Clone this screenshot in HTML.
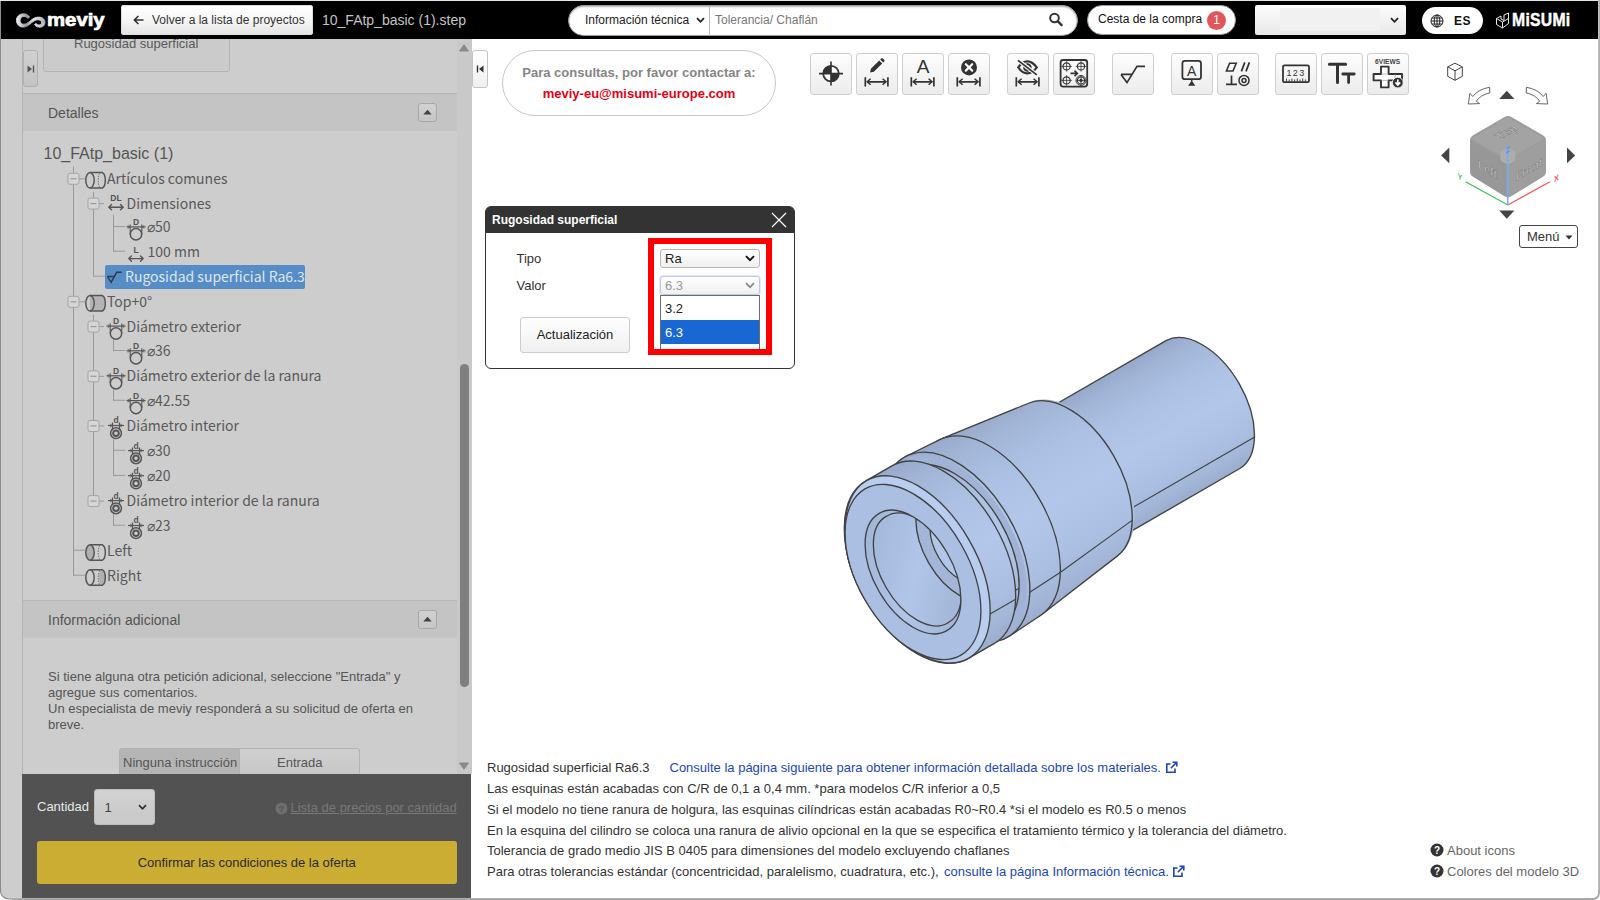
<!DOCTYPE html>
<html lang="es">
<head>
<meta charset="utf-8">
<title>meviy</title>
<style>
*{box-sizing:border-box;margin:0;padding:0}
html,body{width:1600px;height:900px;overflow:hidden;background:#fff}
body{position:relative;font-family:"Liberation Sans",Arial,sans-serif;font-size:12px;color:#333}
.abs{position:absolute}
#frame{position:absolute;left:0;top:0;width:1600px;height:900px;overflow:hidden}
#hdr{position:absolute;left:1px;top:1px;width:1597px;height:38px;background:#000}
#gutter{position:absolute;left:1px;top:39px;width:22px;height:859px;background:#cdcdcd}
#left{position:absolute;left:0;top:39px;width:472px;height:735px;overflow:hidden}
.tr{font-family:'Noto Sans CJK JP','Liberation Sans',sans-serif;font-size:14px;line-height:24px;height:24px}
#main{position:absolute;left:471px;top:39px;width:1127px;height:859px;background:#fff}
#buy{position:absolute;left:22px;top:774px;width:449px;height:124px;background:#525252}
.t{position:absolute;white-space:nowrap;line-height:1}
#backbtn{left:120px;top:4px;width:192px;height:30px;border-radius:2px;background:linear-gradient(#fff,#f6f6f6 50%,#e4e4e4);border:1px solid #ddd}
#search{left:567px;top:4px;width:510px;height:31px;border-radius:16px;background:#fff;border:1px solid #999;box-shadow:inset 0 1px 2px rgba(0,0,0,.3)}
#cart{left:1086px;top:4px;width:149px;height:30px;border-radius:15px;background:#fff;border:1px solid #999}
#usersel{left:1254px;top:4px;width:151px;height:30px;border-radius:2px;background:linear-gradient(#fdfdfd,#e8e8e8)}
#lang{left:1421px;top:6px;width:60.500px;height:27px;border-radius:13.500px;background:#fff}
.tb{position:absolute;top:53px;width:42px;height:42px;border:1px solid #cfcfcf;border-radius:3px;background:linear-gradient(#fdfdfd,#ececec)}
#dlg{left:485px;top:206px;width:310px;height:163px;border:1px solid #333;border-radius:6px;background:#fff}
.sel{width:100px;height:19px;border:1px solid #b8b8b8;border-radius:3px;background:linear-gradient(#fff,#f0f0f0)}
.nt{left:487px;font-size:13px;color:#333}
/*SECTION-CSS*/
</style>
</head>
<body>
<div id="frame">
<div id="main"></div>
<div id="gutter"></div>
<div id="left">
<!--LEFT-START-->
<div class="abs" style="left:23px;top:0px;width:449px;height:735px;background:#cdcdcd"></div>
<div class="abs" style="left:22px;top:0px;width:1px;height:735px;background:#b4b4b4"></div>
<div class="abs" style="left:43px;top:-10px;width:187px;height:43px;border:1px solid #b4b4b4;border-radius:3px;background:#cbcbcb"></div>
<div class="t" style="left:74px;top:-2px;font-size:13px;color:#5a5a5a">Rugosidad superficial</div>
<div class="abs" style="left:23px;top:11px;width:15px;height:37px;border:1px solid #b0b0b0;border-radius:3px;background:linear-gradient(#d0d0d0,#c4c4c4)"><svg width="8" height="8" viewBox="0 0 8 8" style="position:absolute;left:3px;top:14px"><path d="M0.500 0.500L5 4 0.500 7.500z" fill="#555"/><rect x="5.800" y="0.500" width="1.400" height="7" fill="#555"/></svg></div>
<div class="abs" style="left:23px;top:54px;width:434px;height:1px;background:#b6b6b6"></div>
<div class="abs" style="left:23px;top:55px;width:434px;height:37px;background:#c4c4c4"></div>
<div class="t" style="left:48px;top:67px;font-size:14px;color:#555">Detalles</div>
<div class="abs" style="left:418px;top:64px;width:19px;height:19px;border:1px solid #a8a8a8;border-radius:3px;background:linear-gradient(#d2d2d2,#c6c6c6)"><svg width="9" height="6" viewBox="0 0 9 6" style="position:absolute;left:4px;top:5px"><path d="M0.300 5.500L4.500 0.800 8.700 5.500z" fill="#444"/></svg></div>
<div class="abs" style="left:23px;top:561px;width:434px;height:1px;background:#b6b6b6"></div>
<div class="abs" style="left:23px;top:562px;width:434px;height:37px;background:#c4c4c4"></div>
<div class="t" style="left:48px;top:574px;font-size:14px;color:#555">Información adicional</div>
<div class="abs" style="left:418px;top:571px;width:19px;height:19px;border:1px solid #a8a8a8;border-radius:3px;background:linear-gradient(#d2d2d2,#c6c6c6)"><svg width="9" height="6" viewBox="0 0 9 6" style="position:absolute;left:4px;top:5px"><path d="M0.300 5.500L4.500 0.800 8.700 5.500z" fill="#444"/></svg></div>
<div class="t" style="left:44px;top:107px;left:43.500px;font-size:16px;color:#555">10_FAtp_basic (1)</div>
<div class="abs" style="left:105px;top:226px;width:200px;height:24px;background:#568dc6;border-radius:2px"></div>
<div class="t tr" style="left:107px;top:131.8px;color:#595959">Artículos comunes</div>
<div class="t tr" style="left:126.5px;top:156.6px;color:#595959">Dimensiones</div>
<div class="t tr" style="left:147px;top:180.4px;color:#595959">⌀50</div>
<div class="t tr" style="left:147.5px;top:205.0px;color:#595959">100 mm</div>
<div class="t tr" style="left:125px;top:230.0px;color:#dfe6ee">Rugosidad superficial Ra6.3</div>
<div class="t tr" style="left:107px;top:254.8px;color:#595959">Top+0°</div>
<div class="t tr" style="left:126.5px;top:279.6px;color:#595959">Diámetro exterior</div>
<div class="t tr" style="left:147px;top:304.3px;color:#595959">⌀36</div>
<div class="t tr" style="left:126.5px;top:329.3px;color:#595959">Diámetro exterior de la ranura</div>
<div class="t tr" style="left:147px;top:354.1px;color:#595959">⌀42.55</div>
<div class="t tr" style="left:126.5px;top:379.0px;color:#595959">Diámetro interior</div>
<div class="t tr" style="left:147px;top:404.1px;color:#595959">⌀30</div>
<div class="t tr" style="left:147px;top:429.2px;color:#595959">⌀20</div>
<div class="t tr" style="left:126.5px;top:454.1px;color:#595959">Diámetro interior de la ranura</div>
<div class="t tr" style="left:147px;top:479.0px;color:#595959">⌀23</div>
<div class="t tr" style="left:107px;top:504.0px;color:#595959">Left</div>
<div class="t tr" style="left:107px;top:529.0px;color:#595959">Right</div>
<svg class="abs" style="left:0;top:0" width="472" height="735" viewBox="0 0 472 735"><path d="M73.5 127.5V537.0" stroke="#9a9a9a" stroke-width="1" fill="none"/><path d="M93.5 152.8V238.0" stroke="#9a9a9a" stroke-width="1" fill="none"/><path d="M113.5 175.6V213.0" stroke="#9a9a9a" stroke-width="1" fill="none"/><path d="M93.5 275.8V462.1" stroke="#9a9a9a" stroke-width="1" fill="none"/><path d="M113.5 300.6V312.3" stroke="#9a9a9a" stroke-width="1" fill="none"/><path d="M113.5 350.3V362.1" stroke="#9a9a9a" stroke-width="1" fill="none"/><path d="M113.5 400.0V437.2" stroke="#9a9a9a" stroke-width="1" fill="none"/><path d="M113.5 475.1V487.0" stroke="#9a9a9a" stroke-width="1" fill="none"/><path d="M73.5 139.8H85.0" stroke="#9a9a9a" stroke-width="1" fill="none"/><rect x="68.0" y="134.3" width="11" height="11" rx="2" fill="#d6d6d6" stroke="#a4a4a4"/><path d="M70.5 139.8h6" stroke="#999" stroke-width="1.2"/><g transform="translate(85,132.8)" fill="none" stroke="#555" stroke-width="1.500"><path d="M5 0.800H17.500Q20.300 2.500 20.300 8.500T17.500 16.200H5"/><ellipse cx="5" cy="8.500" rx="4.200" ry="7.700" fill="none"/><path d="M14.500 1.500Q12 8.500 14.500 15.500" stroke-width="1" stroke-dasharray="1.200 1.400"/></g><path d="M93.5 164.6H104.0" stroke="#9a9a9a" stroke-width="1" fill="none"/><rect x="88.0" y="159.1" width="11" height="11" rx="2" fill="#d6d6d6" stroke="#a4a4a4"/><path d="M90.5 164.6h6" stroke="#999" stroke-width="1.2"/><text x="116" y="161.6" font-size="8.500" font-weight="bold" text-anchor="middle" fill="#555" font-family="Liberation Sans,sans-serif">DL</text><path d="M109 168.2H123M111.5 165.6L108.8 168.2l2.700 2.600M120.5 165.6L123.2 168.2l-2.700 2.600" stroke="#555" stroke-width="1.4" fill="none" stroke-linejoin="round" stroke-linecap="round"/><path d="M113.5 187.6H125.0" stroke="#9a9a9a" stroke-width="1" fill="none"/><g transform="translate(126.5,188.4)" fill="none" stroke="#555"><path d="M0 -0.500H19" stroke-width="1.200"/><path d="M3.700 -3V6.500M15.300 -3V6.500" stroke-width="1.100"/><path d="M1.200 -2l2.400 1.500-2.400 1.500M17.800 -2l-2.400 1.500 2.400 1.500" stroke-width=".8"/><circle cx="9.500" cy="6.900" r="5.700" stroke-width="1.500"/><text x="9.500" y="-2.600" font-size="8.500" font-weight="bold" text-anchor="middle" fill="#555" stroke="none" font-family="Liberation Sans,sans-serif">D</text></g><path d="M113.5 212.2H125.0" stroke="#9a9a9a" stroke-width="1" fill="none"/><text x="136" y="213.5" font-size="8.500" font-weight="bold" text-anchor="middle" fill="#555" font-family="Liberation Sans,sans-serif">L</text><path d="M129 219.6H143M131.5 217.0L128.8 219.6l2.700 2.600M140.5 217.0L143.2 219.6l-2.700 2.600" stroke="#555" stroke-width="1.4" fill="none" stroke-linejoin="round" stroke-linecap="round"/><path d="M93.5 237.2H105.0" stroke="#9a9a9a" stroke-width="1" fill="none"/><path d="M107.500 237.5h7.200M107.500 237.5l3.600 5.800 5.600-10h5" stroke="#2e3a46" stroke-width="1.400" fill="none" stroke-linejoin="miter"/><path d="M73.5 262.8H85.0" stroke="#9a9a9a" stroke-width="1" fill="none"/><rect x="68.0" y="257.3" width="11" height="11" rx="2" fill="#d6d6d6" stroke="#a4a4a4"/><path d="M70.5 262.8h6" stroke="#999" stroke-width="1.2"/><g transform="translate(85,255.8)" fill="none" stroke="#555" stroke-width="1.500"><path d="M5 0.800H17.500Q20.300 2.500 20.300 8.500T17.500 16.200H5z" fill="#b4b4b4" stroke="none"/><path d="M5 0.800H17.500Q20.300 2.500 20.300 8.500T17.500 16.200H5"/><ellipse cx="5" cy="8.500" rx="4.200" ry="7.700" fill="none"/></g><path d="M93.5 287.6H104.0" stroke="#9a9a9a" stroke-width="1" fill="none"/><rect x="88.0" y="282.1" width="11" height="11" rx="2" fill="#d6d6d6" stroke="#a4a4a4"/><path d="M90.5 287.6h6" stroke="#999" stroke-width="1.2"/><g transform="translate(106.5,287.6)" fill="none" stroke="#555"><path d="M0 -0.500H19" stroke-width="1.200"/><path d="M3.700 -3V6.500M15.300 -3V6.500" stroke-width="1.100"/><path d="M1.200 -2l2.400 1.500-2.400 1.500M17.800 -2l-2.400 1.500 2.400 1.500" stroke-width=".8"/><circle cx="9.500" cy="6.900" r="5.700" stroke-width="1.500"/><text x="9.500" y="-2.600" font-size="8.500" font-weight="bold" text-anchor="middle" fill="#555" stroke="none" font-family="Liberation Sans,sans-serif">D</text></g><path d="M113.5 311.5H125.0" stroke="#9a9a9a" stroke-width="1" fill="none"/><g transform="translate(126.5,312.3)" fill="none" stroke="#555"><path d="M0 -0.500H19" stroke-width="1.200"/><path d="M3.700 -3V6.500M15.300 -3V6.500" stroke-width="1.100"/><path d="M1.200 -2l2.400 1.500-2.400 1.500M17.800 -2l-2.400 1.500 2.400 1.500" stroke-width=".8"/><circle cx="9.500" cy="6.900" r="5.700" stroke-width="1.500"/><text x="9.500" y="-2.600" font-size="8.500" font-weight="bold" text-anchor="middle" fill="#555" stroke="none" font-family="Liberation Sans,sans-serif">D</text></g><path d="M93.5 337.3H104.0" stroke="#9a9a9a" stroke-width="1" fill="none"/><rect x="88.0" y="331.8" width="11" height="11" rx="2" fill="#d6d6d6" stroke="#a4a4a4"/><path d="M90.5 337.3h6" stroke="#999" stroke-width="1.2"/><g transform="translate(106.5,337.3)" fill="none" stroke="#555"><path d="M0 -0.500H19" stroke-width="1.200"/><path d="M3.700 -3V6.500M15.300 -3V6.500" stroke-width="1.100"/><path d="M1.200 -2l2.400 1.500-2.400 1.500M17.800 -2l-2.400 1.500 2.400 1.500" stroke-width=".8"/><circle cx="9.500" cy="6.900" r="5.700" stroke-width="1.500"/><text x="9.500" y="-2.600" font-size="8.500" font-weight="bold" text-anchor="middle" fill="#555" stroke="none" font-family="Liberation Sans,sans-serif">D</text></g><path d="M113.5 361.3H125.0" stroke="#9a9a9a" stroke-width="1" fill="none"/><g transform="translate(126.5,362.1)" fill="none" stroke="#555"><path d="M0 -0.500H19" stroke-width="1.200"/><path d="M3.700 -3V6.500M15.300 -3V6.500" stroke-width="1.100"/><path d="M1.200 -2l2.400 1.500-2.400 1.500M17.800 -2l-2.400 1.500 2.400 1.500" stroke-width=".8"/><circle cx="9.500" cy="6.900" r="5.700" stroke-width="1.500"/><text x="9.500" y="-2.600" font-size="8.500" font-weight="bold" text-anchor="middle" fill="#555" stroke="none" font-family="Liberation Sans,sans-serif">D</text></g><path d="M93.5 387.0H104.0" stroke="#9a9a9a" stroke-width="1" fill="none"/><rect x="88.0" y="381.5" width="11" height="11" rx="2" fill="#d6d6d6" stroke="#a4a4a4"/><path d="M90.5 387.0h6" stroke="#999" stroke-width="1.2"/><g transform="translate(106.5,387.0)" fill="none" stroke="#555"><path d="M1.500 -0.500H17.500" stroke-width="1.200"/><path d="M6 -3.500V4M13 -3.500V4" stroke-width="1.200"/><path d="M3.600 -2l2.200 1.500-2.200 1.500M15.400 -2l-2.200 1.500 2.200 1.500" stroke-width=".8"/><circle cx="9.500" cy="7.200" r="5.400" stroke-width="1.500"/><circle cx="9.500" cy="7.200" r="2.800" stroke-width="2"/><text x="9.500" y="-2.600" font-size="8.500" font-weight="bold" text-anchor="middle" fill="#555" stroke="none" font-family="Liberation Sans,sans-serif">d</text></g><path d="M113.5 411.3H125.0" stroke="#9a9a9a" stroke-width="1" fill="none"/><g transform="translate(126.5,412.1)" fill="none" stroke="#555"><path d="M1.500 -0.500H17.500" stroke-width="1.200"/><path d="M6 -3.500V4M13 -3.500V4" stroke-width="1.200"/><path d="M3.600 -2l2.200 1.500-2.200 1.500M15.400 -2l-2.200 1.500 2.200 1.500" stroke-width=".8"/><circle cx="9.500" cy="7.200" r="5.400" stroke-width="1.500"/><circle cx="9.500" cy="7.200" r="2.800" stroke-width="2"/><text x="9.500" y="-2.600" font-size="8.500" font-weight="bold" text-anchor="middle" fill="#555" stroke="none" font-family="Liberation Sans,sans-serif">d</text></g><path d="M113.5 436.4H125.0" stroke="#9a9a9a" stroke-width="1" fill="none"/><g transform="translate(126.5,437.2)" fill="none" stroke="#555"><path d="M1.500 -0.500H17.500" stroke-width="1.200"/><path d="M6 -3.500V4M13 -3.500V4" stroke-width="1.200"/><path d="M3.600 -2l2.200 1.500-2.200 1.500M15.400 -2l-2.200 1.500 2.200 1.500" stroke-width=".8"/><circle cx="9.500" cy="7.200" r="5.400" stroke-width="1.500"/><circle cx="9.500" cy="7.200" r="2.800" stroke-width="2"/><text x="9.500" y="-2.600" font-size="8.500" font-weight="bold" text-anchor="middle" fill="#555" stroke="none" font-family="Liberation Sans,sans-serif">d</text></g><path d="M93.5 462.1H104.0" stroke="#9a9a9a" stroke-width="1" fill="none"/><rect x="88.0" y="456.6" width="11" height="11" rx="2" fill="#d6d6d6" stroke="#a4a4a4"/><path d="M90.5 462.1h6" stroke="#999" stroke-width="1.2"/><g transform="translate(106.5,462.1)" fill="none" stroke="#555"><path d="M1.500 -0.500H17.500" stroke-width="1.200"/><path d="M6 -3.500V4M13 -3.500V4" stroke-width="1.200"/><path d="M3.600 -2l2.200 1.500-2.200 1.500M15.400 -2l-2.200 1.500 2.200 1.500" stroke-width=".8"/><circle cx="9.500" cy="7.200" r="5.400" stroke-width="1.500"/><circle cx="9.500" cy="7.200" r="2.800" stroke-width="2"/><text x="9.500" y="-2.600" font-size="8.500" font-weight="bold" text-anchor="middle" fill="#555" stroke="none" font-family="Liberation Sans,sans-serif">d</text></g><path d="M113.5 486.2H125.0" stroke="#9a9a9a" stroke-width="1" fill="none"/><g transform="translate(126.5,487.0)" fill="none" stroke="#555"><path d="M1.500 -0.500H17.500" stroke-width="1.200"/><path d="M6 -3.500V4M13 -3.500V4" stroke-width="1.200"/><path d="M3.600 -2l2.200 1.500-2.200 1.500M15.400 -2l-2.200 1.500 2.200 1.500" stroke-width=".8"/><circle cx="9.500" cy="7.200" r="5.400" stroke-width="1.500"/><circle cx="9.500" cy="7.200" r="2.800" stroke-width="2"/><text x="9.500" y="-2.600" font-size="8.500" font-weight="bold" text-anchor="middle" fill="#555" stroke="none" font-family="Liberation Sans,sans-serif">d</text></g><path d="M73.5 511.2H85.0" stroke="#9a9a9a" stroke-width="1" fill="none"/><g transform="translate(85,505.0)" fill="none" stroke="#555" stroke-width="1.500"><path d="M5 0.800H17.500Q20.300 2.500 20.300 8.500T17.500 16.200H5"/><ellipse cx="5" cy="8.500" rx="4.200" ry="7.700" fill="#b0b0b0"/><path d="M14.500 1.500Q12 8.500 14.500 15.500" stroke-width="1" stroke-dasharray="1.200 1.400"/></g><path d="M73.5 536.2H85.0" stroke="#9a9a9a" stroke-width="1" fill="none"/><g transform="translate(85,530.0)" fill="none" stroke="#555" stroke-width="1.500"><ellipse cx="17" cy="8.500" rx="3.200" ry="7" fill="#b0b0b0" stroke="none"/><path d="M5 0.800H17.500Q20.300 2.500 20.300 8.500T17.500 16.200H5"/><ellipse cx="5" cy="8.500" rx="4.200" ry="7.700" fill="none"/><path d="M14.500 1.500Q12 8.500 14.500 15.500" stroke-width="1" stroke-dasharray="1.200 1.400"/></g></svg>
<div class="t" style="left:48px;top:630.5px;font-size:13px;color:#555">Si tiene alguna otra petición adicional, seleccione "Entrada" y</div>
<div class="t" style="left:48px;top:646.5px;font-size:13px;color:#555">agregue sus comentarios.</div>
<div class="t" style="left:48px;top:662.5px;font-size:13px;color:#555">Un especialista de meviy responderá a su solicitud de oferta en</div>
<div class="t" style="left:48px;top:678.5px;font-size:13px;color:#555">breve.</div>
<div class="abs" style="left:119px;top:709px;width:121px;height:30px;background:#b5b5b5;border:1px solid #b0b0b0;border-radius:3px 0 0 0"></div>
<div class="abs" style="left:240px;top:709px;width:120px;height:30px;background:linear-gradient(#d0d0d0,#c6c6c6);border:1px solid #b4b4b4;border-left:none;border-radius:0 3px 0 0"></div>
<div class="t" style="left:123px;top:716.5px;font-size:13px;color:#555">Ninguna instrucción</div>
<div class="t" style="left:277px;top:716.5px;font-size:13px;color:#555">Entrada</div>
<div class="abs" style="left:457px;top:0px;width:15px;height:735px;background:#c9c9c9"></div>
<svg class="abs" style="left:459px;top:5px" width="10" height="8" viewBox="0 0 10 8"><path d="M0.500 7L5 0.800 9.500 7z" fill="#8a8a8a" stroke="#8a8a8a" stroke-linejoin="round"/></svg>
<svg class="abs" style="left:459px;top:723px" width="10" height="8" viewBox="0 0 10 8"><path d="M0.500 1L5 7.200 9.500 1z" fill="#8a8a8a" stroke="#8a8a8a" stroke-linejoin="round"/></svg>
<div class="abs" style="left:459.5px;top:325px;width:9px;height:323px;background:#7f7f7f;border-radius:5px"></div>
<!--LEFT-END-->
</div>
<div id="buy">
<!--BUY-START-->
<div class="t" style="left:15px;top:26px;font-size:13px;color:#e8e8e8">Cantidad</div>
<div class="abs" style="left:71.500px;top:15px;width:61.500px;height:36px;border-radius:3px;background:linear-gradient(#d2d2d2,#c8c8c8);border:1px solid #bdbdbd"><span class="t" style="left:10px;top:11px;font-size:13px;color:#444">1</span><svg class="abs" style="left:43px;top:14px" width="9" height="7" viewBox="0 0 9 7"><path d="M1 1.200l3.500 3.600L8 1.200" fill="none" stroke="#333" stroke-width="1.800"/></svg></div>
<svg class="abs" style="left:252.500px;top:28px" width="13" height="13" viewBox="0 0 13 13"><circle cx="6.500" cy="6.500" r="6" fill="#6e6e6e"/><text x="6.500" y="10" font-size="9.500" font-weight="bold" text-anchor="middle" fill="#525252" font-family="Liberation Sans,sans-serif">?</text></svg>
<div class="t" style="left:268.500px;top:27px;font-size:13px;color:#787878;text-decoration:underline">Lista de precios por cantidad</div>
<div class="abs" style="left:15px;top:67px;width:419.500px;height:43px;border-radius:3px;background:#cbad33;text-align:center;line-height:44px;font-size:13px;color:#2b2b2b">Confirmar las condiciones de la oferta</div>
<!--BUY-END-->
</div>
<div id="hdr">
<svg class="abs" style="left:14px;top:10px" width="32" height="18" viewBox="0 0 32 18">
<defs><linearGradient id="lg1" x1="0" y1="0" x2="1" y2="0"><stop offset="0" stop-color="#f2f2f4"/><stop offset="0.35" stop-color="#9a9aa0"/><stop offset="0.6" stop-color="#e6e6ea"/><stop offset="1" stop-color="#b0b0b6"/></linearGradient></defs>
<path d="M8.600 2.800C4.200 2.800 1.500 5.800 1.500 9.400c0 3.700 2.800 6.700 6.600 6.700 3.400 0 5.700-2 8.400-4.300 2-1.700 3.900-3 6.300-3 2.200 0 3.700 1.100 3.700 2.800 0 1.400-1 2.300-2.400 2.300-1.300 0-2.300-.6-3.300-1.500l-1.300 1.300c1.500 1.700 3.400 2.500 5.500 2.500 3 0 5-1.900 5-4.700 0-3.300-2.800-5.400-6.500-5.400-3.300 0-5.600 1.700-8.300 3.900-2.200 1.800-4.200 3.200-6.500 3.200-2.200 0-3.600-1.500-3.600-3.700 0-2.300 1.500-4 3.800-4 1.600 0 2.900.7 4.200 1.800l1.400-1.400C12.900 3.800 11 2.800 8.600 2.800z" fill="url(#lg1)" stroke="url(#lg1)" stroke-width=".9" stroke-linejoin="round"/>
</svg>
<div class="t" style="left:46px;top:9.500px;font-size:18px;font-weight:bold;color:#fff;-webkit-text-stroke:.7px #fff;transform-origin:0 0;transform:scaleX(1.13)" id="mv">meviy</div>
<div class="abs" id="backbtn"><svg width="11" height="10" viewBox="0 0 11 10" style="position:absolute;left:11px;top:9px"><path d="M10.500 5H1.800M5.400 1L1.400 5l4 4" fill="none" stroke="#333" stroke-width="1.700"/></svg><span class="t" style="left:30px;top:8px;font-size:12px;color:#333">Volver a la lista de proyectos</span></div>
<div class="t" style="left:321px;top:12px;font-size:14px;color:#c4c4c4">10_FAtp_basic (1).step</div>
<div class="abs" id="search">
<span class="t" style="left:16px;top:8px;font-size:12px;color:#222">Información técnica</span>
<svg class="abs" style="left:127px;top:11px" width="9" height="7" viewBox="0 0 9 7"><path d="M1 1.200l3.500 3.600L8 1.200" fill="none" stroke="#222" stroke-width="1.800"/></svg>
<div class="abs" style="left:140px;top:0;width:1px;height:30px;background:#bbb"></div>
<span class="t" style="left:146px;top:8px;font-size:12px;color:#777">Tolerancia/ Chaflán</span>
<svg class="abs" style="left:479px;top:6px" width="16" height="16" viewBox="0 0 16 16"><circle cx="6.500" cy="6" r="4.300" fill="none" stroke="#333" stroke-width="2"/><path d="M9.800 9.300l3.800 3.800" stroke="#333" stroke-width="2.400" stroke-linecap="round"/></svg>
</div>
<div class="abs" id="cart"><span class="t" style="left:10px;top:7px;font-size:12px;color:#111">Cesta de la compra</span><span class="abs" style="left:119px;top:5px;width:19px;height:19px;border-radius:10px;background:#e0575b;color:#fff;font-size:12px;text-align:center;line-height:19px">1</span></div>
<div class="abs" id="usersel"><div class="abs" style="left:25px;top:3px;width:100px;height:23px;background:#f1f1f1"></div><svg class="abs" style="left:135px;top:12px" width="9" height="7" viewBox="0 0 9 7"><path d="M1 1.200l3.500 3.600L8 1.200" fill="none" stroke="#222" stroke-width="1.800"/></svg></div>
<div class="abs" id="lang"><svg class="abs" style="left:8px;top:6.500px" width="14" height="14" viewBox="0 0 14 14"><g fill="none" stroke="#222" stroke-width="1"><circle cx="7" cy="7" r="6"/><ellipse cx="7" cy="7" rx="2.800" ry="6"/><path d="M1 7h12M1.800 4h10.400M1.800 10h10.400M7 1v12"/></g></svg><span class="t" style="left:32px;top:8px;font-size:12px;font-weight:bold;color:#111;letter-spacing:.5px">ES</span></div>
<svg class="abs" style="left:1493.500px;top:11px" width="16" height="18" viewBox="0 0 16 18"><g fill="none" stroke="#e8e8e8" stroke-width="1" stroke-linejoin="round"><path d="M1.500 6.500L6 4v3l3 1.500V3L13.500 1v10.500L7.500 16 1.500 12.500z"/><path d="M1.500 6.500l6 3.500v6M7.500 10L13.500 6.500"/></g></svg>
<div class="t" id="misumi" style="left:1511px;top:11px;font-size:17.500px;font-weight:bold;color:#fff;transform-origin:0 0;transform:scaleX(.9);letter-spacing:.3px;-webkit-text-stroke:.45px #fff">MiSUMi</div>
<!--HDR-->
</div>
<!--TB-START-->
<div class="tb" style="left:810px"><svg width="42" height="42" viewBox="0 0 42 42" style="position:absolute;left:-1px;top:-1px"><circle cx="21" cy="20.600" r="7.800" fill="#fff" stroke="#333" stroke-width="1.800"/><path d="M21 20.600V12.800A7.800 7.800 0 0 0 13.200 20.600zM21 20.600V28.400A7.800 7.800 0 0 0 28.800 20.600z" fill="#333"/><path d="M9 20.600H33M21 8.600V32.600" stroke="#333" stroke-width="1.600"/></svg></div>
<div class="tb" style="left:856px"><svg width="42" height="42" viewBox="0 0 42 42" style="position:absolute;left:-1px;top:-1px"><path d="M14 19.600l.9-3.900 8.300-8.300 3 3-8.300 8.300zM24.200 6.400l1-1a1.200 1.200 0 0 1 1.700 0l1.300 1.300a1.200 1.200 0 0 1 0 1.700l-1 1z" fill="#333"/><path d="M9.299999999999999 24.200000000000003v9.200M31.900000000000002 24.200000000000003v9.200M11.1 28.8H30.1" stroke="#333" stroke-width="1.700" fill="none"/><path d="M14.6 25.8L11.2 28.8l3.400 3M26.6 25.8L30.0 28.8l-3.400 3" stroke="#333" stroke-width="1.500" fill="none"/></svg></div>
<div class="tb" style="left:902px"><svg width="42" height="42" viewBox="0 0 42 42" style="position:absolute;left:-1px;top:-1px"><text x="21" y="20" font-size="19" text-anchor="middle" fill="#333" font-family="Liberation Sans,sans-serif">A</text><path d="M9.299999999999999 24.200000000000003v9.200M31.900000000000002 24.200000000000003v9.200M11.1 28.8H30.1" stroke="#333" stroke-width="1.700" fill="none"/><path d="M14.6 25.8L11.2 28.8l3.400 3M26.6 25.8L30.0 28.8l-3.400 3" stroke="#333" stroke-width="1.500" fill="none"/></svg></div>
<div class="tb" style="left:948px"><svg width="42" height="42" viewBox="0 0 42 42" style="position:absolute;left:-1px;top:-1px"><circle cx="21" cy="14.400" r="8" fill="#333"/><path d="M17.800 11.200l6.400 6.400M24.200 11.200l-6.400 6.400" stroke="#fff" stroke-width="2.200" stroke-linecap="round"/><path d="M9.299999999999999 24.200000000000003v9.200M31.900000000000002 24.200000000000003v9.200M11.1 28.8H30.1" stroke="#333" stroke-width="1.700" fill="none"/><path d="M14.6 25.8L11.2 28.8l3.400 3M26.6 25.8L30.0 28.8l-3.400 3" stroke="#333" stroke-width="1.500" fill="none"/></svg></div>
<div class="tb" style="left:1007px"><svg width="42" height="42" viewBox="0 0 42 42" style="position:absolute;left:-1px;top:-1px"><path d="M11.200 14.400Q15.500 8.400 20.400 8.400T29.800 14.400Q25.500 20.400 20.400 20.400T11.200 14.400z" fill="none" stroke="#333" stroke-width="2.100"/><circle cx="20.400" cy="14.400" r="3.200" fill="none" stroke="#333" stroke-width="2.100"/><path d="M10.500 6.800L30.200 22" stroke="#f4f4f4" stroke-width="4"/><path d="M11 7.400L29.800 21.800" stroke="#333" stroke-width="1.700"/><path d="M9.299999999999999 24.200000000000003v9.200M31.900000000000002 24.200000000000003v9.200M11.1 28.8H30.1" stroke="#333" stroke-width="1.700" fill="none"/><path d="M14.6 25.8L11.2 28.8l3.400 3M26.6 25.8L30.0 28.8l-3.400 3" stroke="#333" stroke-width="1.500" fill="none"/></svg></div>
<div class="tb" style="left:1053px"><svg width="42" height="42" viewBox="0 0 42 42" style="position:absolute;left:-1px;top:-1px"><rect x="7.600" y="7" width="26.600" height="26.600" rx="2.500" fill="none" stroke="#333" stroke-width="1.800"/><circle cx="13.6" cy="13.4" r="3.600" fill="none" stroke="#333" stroke-width="1.200"/><path d="M8.399999999999999 13.4h10.400M13.6 8.2v10.400" stroke="#333" stroke-width=".8"/><circle cx="28" cy="13.4" r="3.600" fill="none" stroke="#333" stroke-width="1.200"/><path d="M22.8 13.4h10.400M28 8.2v10.400" stroke="#333" stroke-width=".8"/><circle cx="13.6" cy="27.4" r="3.600" fill="none" stroke="#333" stroke-width="1.200"/><path d="M8.399999999999999 27.4h10.400M13.6 22.2v10.400" stroke="#333" stroke-width=".8"/><circle cx="28" cy="27.4" r="3.600" fill="none" stroke="#333" stroke-width="1.200"/><path d="M22.8 27.4h10.400M28 22.2v10.400" stroke="#333" stroke-width=".8"/><circle cx="28" cy="27.4" r="1.600" fill="#333"/><circle cx="28" cy="27.4" r="5" fill="none" stroke="#333" stroke-width=".9"/><path d="M17.500 20.400h6.500M21.500 17.600l2.900 2.800-2.900 2.800" stroke="#333" stroke-width="1.600" fill="none"/></svg></div>
<div class="tb" style="left:1112px"><svg width="42" height="42" viewBox="0 0 42 42" style="position:absolute;left:-1px;top:-1px"><path d="M9 21.400H20.200M9 21.400L15 29.600 25 13.400H33" fill="none" stroke="#333" stroke-width="1.700"/></svg></div>
<div class="tb" style="left:1170.5px"><svg width="42" height="42" viewBox="0 0 42 42" style="position:absolute;left:-1px;top:-1px"><rect x="11.400" y="7.800" width="18.600" height="18.400" rx="2.500" fill="none" stroke="#333" stroke-width="1.800"/><text x="20.700" y="23" font-size="14" text-anchor="middle" fill="#333" font-family="Liberation Sans,sans-serif">A</text><path d="M20.700 27.400l3.600 5.400h-7.200z" fill="#333"/><path d="M20.700 26.200v2" stroke="#333" stroke-width="1.500"/></svg></div>
<div class="tb" style="left:1216.5px"><svg width="42" height="42" viewBox="0 0 42 42" style="position:absolute;left:-1px;top:-1px"><path d="M9.400 18L12.600 10.200H19.200L16 18z" fill="none" stroke="#333" stroke-width="1.600"/><path d="M24.400 18.400L27.800 9.400M29 18.400L32.400 9.400" stroke="#333" stroke-width="1.700"/><path d="M14.500 22.400V31.400M9 31.400H20" stroke="#333" stroke-width="1.700"/><circle cx="27" cy="27.400" r="5" fill="none" stroke="#333" stroke-width="1.500"/><circle cx="27" cy="27.400" r="2" fill="none" stroke="#333" stroke-width="1.500"/></svg></div>
<div class="tb" style="left:1275.4px"><svg width="42" height="42" viewBox="0 0 42 42" style="position:absolute;left:-1px;top:-1px"><rect x="8" y="12.400" width="26" height="16.800" rx="1.500" fill="none" stroke="#333" stroke-width="1.800"/><text x="21" y="22.600" font-size="9" text-anchor="middle" fill="#333" font-family="Liberation Sans,sans-serif" letter-spacing="1.300">123</text><path d="M11.500 25.500v3M14.200 26.500v2M16.900 25.500v3M19.600 26.500v2M22.300 25.500v3M25 26.500v2M27.700 25.500v3M30.400 26.500v2" stroke="#333" stroke-width=".9"/></svg></div>
<div class="tb" style="left:1321.2px"><svg width="42" height="42" viewBox="0 0 42 42" style="position:absolute;left:-1px;top:-1px"><path d="M8.400 11.200H24.600M16.500 11.200V29.600" stroke="#333" stroke-width="3" fill="none" stroke-linecap="round"/><path d="M21.800 21H33.200M27.600 21V29.600" stroke="#333" stroke-width="2.800" fill="none" stroke-linecap="round"/></svg></div>
<div class="tb" style="left:1367.2px"><svg width="42" height="42" viewBox="0 0 42 42" style="position:absolute;left:-1px;top:-1px"><text x="20.600" y="10.800" font-size="7" font-weight="bold" text-anchor="middle" fill="#444" font-family="Liberation Sans,sans-serif" textLength="25" lengthAdjust="spacingAndGlyphs">6VIEWS</text><path d="M14 13.600H21.600V21H35V27.400H21.600V34.400H14V27.400H6.600V21H14z" fill="#fff" stroke="#333" stroke-width="1.900" stroke-linejoin="round"/><path d="M14 21H21.600M14 27.400H21.600M28.200 21v6.400" stroke="#888" stroke-width=".6" fill="none"/><circle cx="30.800" cy="29.600" r="5.400" fill="#333" stroke="#f2f2f2" stroke-width="1"/><path d="M30.800 26.400v4.600M28.400 29.400l2.400 2.600 2.400-2.600" stroke="#fff" stroke-width="1.700" fill="none"/></svg></div>
<div class="abs" style="left:502px;top:50px;width:274px;height:66px;border:1px solid #c8c8c8;border-radius:33px;background:#fff"></div>
<div class="t" style="left:502px;width:274px;text-align:center;top:66px;font-size:13px;font-weight:bold;color:#858585">Para consultas, por favor contactar a:</div>
<div class="t" style="left:502px;width:274px;text-align:center;top:87px;font-size:13px;font-weight:bold;color:#e60012">meviy-eu@misumi-europe.com</div>
<div class="abs" style="left:472px;top:50px;width:16px;height:38px;border:1px solid #c4c4c4;border-radius:3px;background:linear-gradient(#fff,#f0f0f0)"><svg width="8" height="8" viewBox="0 0 8 8" style="position:absolute;left:3px;top:14px"><path d="M7.500 0.500L3 4l4.500 3.500z" fill="#333"/><rect x="0.800" y="0.500" width="1.400" height="7" fill="#333"/></svg></div>
<!--TB-END-->
<!--MODEL-START-->
<svg class="abs" style="left:820px;top:310px" width="460" height="380" viewBox="820 310 460 380">
<defs>
<linearGradient id="mg0" gradientUnits="userSpaceOnUse" x1="864.1" y1="481.9" x2="966.6" y2="659.4"><stop offset="0" stop-color="#97a9ca"/><stop offset="0.1" stop-color="#a1b4d6"/><stop offset="0.3" stop-color="#abc0e3"/><stop offset="0.55" stop-color="#b2c7ea"/><stop offset="0.8" stop-color="#aabfe2"/><stop offset="0.93" stop-color="#a2b5d7"/><stop offset="1" stop-color="#9aadce"/></linearGradient>
<linearGradient id="mg1" gradientUnits="userSpaceOnUse" x1="879.1" y1="473.2" x2="981.6" y2="650.7"><stop offset="0" stop-color="#97a9ca"/><stop offset="0.1" stop-color="#a1b4d6"/><stop offset="0.3" stop-color="#abc0e3"/><stop offset="0.55" stop-color="#b2c7ea"/><stop offset="0.8" stop-color="#aabfe2"/><stop offset="0.93" stop-color="#a2b5d7"/><stop offset="1" stop-color="#9aadce"/></linearGradient>
<linearGradient id="mg2" gradientUnits="userSpaceOnUse" x1="891.9" y1="465.8" x2="994.4" y2="643.4"><stop offset="0" stop-color="#97a9ca"/><stop offset="0.1" stop-color="#a1b4d6"/><stop offset="0.3" stop-color="#abc0e3"/><stop offset="0.55" stop-color="#b2c7ea"/><stop offset="0.8" stop-color="#aabfe2"/><stop offset="0.93" stop-color="#a2b5d7"/><stop offset="1" stop-color="#9aadce"/></linearGradient>
<linearGradient id="mg3" gradientUnits="userSpaceOnUse" x1="902.7" y1="471.9" x2="994.6" y2="630.9"><stop offset="0" stop-color="#97a9ca"/><stop offset="0.1" stop-color="#a1b4d6"/><stop offset="0.3" stop-color="#abc0e3"/><stop offset="0.55" stop-color="#b2c7ea"/><stop offset="0.8" stop-color="#aabfe2"/><stop offset="0.93" stop-color="#a2b5d7"/><stop offset="1" stop-color="#9aadce"/></linearGradient>
<linearGradient id="mg4" gradientUnits="userSpaceOnUse" x1="903.5" y1="460.5" x2="1004.8" y2="635.9"><stop offset="0" stop-color="#97a9ca"/><stop offset="0.1" stop-color="#a1b4d6"/><stop offset="0.3" stop-color="#abc0e3"/><stop offset="0.55" stop-color="#b2c7ea"/><stop offset="0.8" stop-color="#aabfe2"/><stop offset="0.93" stop-color="#a2b5d7"/><stop offset="1" stop-color="#9aadce"/></linearGradient>
<linearGradient id="mg5" gradientUnits="userSpaceOnUse" x1="903.5" y1="457.7" x2="1007.2" y2="637.4"><stop offset="0" stop-color="#97a9ca"/><stop offset="0.1" stop-color="#a1b4d6"/><stop offset="0.3" stop-color="#abc0e3"/><stop offset="0.55" stop-color="#b2c7ea"/><stop offset="0.8" stop-color="#aabfe2"/><stop offset="0.93" stop-color="#a2b5d7"/><stop offset="1" stop-color="#9aadce"/></linearGradient>
<linearGradient id="mg6" gradientUnits="userSpaceOnUse" x1="920.9" y1="447.7" x2="1024.6" y2="627.4"><stop offset="0" stop-color="#97a9ca"/><stop offset="0.1" stop-color="#a1b4d6"/><stop offset="0.3" stop-color="#abc0e3"/><stop offset="0.55" stop-color="#b2c7ea"/><stop offset="0.8" stop-color="#aabfe2"/><stop offset="0.93" stop-color="#a2b5d7"/><stop offset="1" stop-color="#9aadce"/></linearGradient>
<linearGradient id="mg7" gradientUnits="userSpaceOnUse" x1="978.8" y1="417.1" x2="1080.0" y2="592.5"><stop offset="0" stop-color="#97a9ca"/><stop offset="0.1" stop-color="#a1b4d6"/><stop offset="0.3" stop-color="#abc0e3"/><stop offset="0.55" stop-color="#b2c7ea"/><stop offset="0.8" stop-color="#aabfe2"/><stop offset="0.93" stop-color="#a2b5d7"/><stop offset="1" stop-color="#9aadce"/></linearGradient>
<linearGradient id="mg8" gradientUnits="userSpaceOnUse" x1="1025.6" y1="404.8" x2="1114.1" y2="558.1"><stop offset="0" stop-color="#97a9ca"/><stop offset="0.1" stop-color="#a1b4d6"/><stop offset="0.3" stop-color="#abc0e3"/><stop offset="0.55" stop-color="#b2c7ea"/><stop offset="0.8" stop-color="#aabfe2"/><stop offset="0.93" stop-color="#a2b5d7"/><stop offset="1" stop-color="#9aadce"/></linearGradient>
<linearGradient id="mg9" gradientUnits="userSpaceOnUse" x1="1099.5" y1="379.1" x2="1173.3" y2="506.9"><stop offset="0" stop-color="#97a9ca"/><stop offset="0.1" stop-color="#a1b4d6"/><stop offset="0.3" stop-color="#abc0e3"/><stop offset="0.55" stop-color="#b2c7ea"/><stop offset="0.8" stop-color="#aabfe2"/><stop offset="0.93" stop-color="#a2b5d7"/><stop offset="1" stop-color="#9aadce"/></linearGradient>
<linearGradient id="hg" gradientUnits="userSpaceOnUse" x1="858.4" y1="557.4" x2="974.5" y2="588.5"><stop offset="0" stop-color="#a2b6d8"/><stop offset="0.5" stop-color="#b0c5e8"/><stop offset="1" stop-color="#a0b3d4"/></linearGradient>
<clipPath id="hc"><path d="M879.2 513.4A67.6 39.1 60 1 1 946.8 630.6A67.6 39.1 60 1 1 879.2 513.4z"/></clipPath></defs>
<g stroke="#424242" stroke-width="1.350" stroke-linejoin="round" fill="#adc2e5">
<path d="M1106.7 545.4A73.8 42.6 60 1 1 1032.9 417.5L1166.0 340.7A73.8 42.6 60 0 1 1239.8 468.5z" fill="url(#mg9)"/>
<path d="M1122.0 513.7L1255.1 436.8" fill="none" stroke-width="1.100"/>
<path d="M1025.6 404.8A88.6 51.1 60 1 1 1114.1 558.1A88.6 51.1 60 1 1 1025.6 404.8z" stroke="none" fill="url(#mg8)"/>
<path d="M1043.4 613.3A101.3 58.5 60 1 1 942.5 438.4L1029.2 403.0A88.6 51.1 60 0 1 1117.5 555.9z" fill="url(#mg7)"/>
<path d="M1060.5 572.3L1132.4 520.1" fill="none" stroke-width="1.100"/>
<path d="M1010.3 635.5A103.7 59.9 60 1 1 906.6 456.0L940.3 439.4A101.3 58.5 60 0 1 1041.5 614.7z" fill="url(#mg6)"/>
<path d="M1029.8 592.2L1060.5 572.3" fill="none" stroke-width="1.100"/>
<path d="M970.2 638.1A101.3 58.5 60 0 1 884.4 489.4L885.0 486.6A103.7 59.9 60 1 1 972.9 638.9z" fill="url(#mg5)"/>
<path d="M903.5 460.5A101.3 58.5 60 1 1 1004.8 635.9A101.3 58.5 60 1 1 903.5 460.5z" stroke="none" fill="#a0b3d6"/>
<path d="M989.1 634.1A91.8 53.0 60 1 1 897.2 475.1L908.2 468.7A91.8 53.0 60 0 1 1000.1 627.8z" fill="url(#mg3)"/>
<path d="M1008.1 594.7L1019.1 588.3" fill="none" stroke-width="1.100"/>
<path d="M891.9 465.8A102.5 59.2 60 1 1 994.4 643.4A102.5 59.2 60 1 1 891.9 465.8z" stroke="none" fill="url(#mg2)"/>
<path d="M968.9 658.1A102.5 59.2 60 1 1 866.4 480.6L891.9 465.8A102.5 59.2 60 0 1 994.4 643.4z" fill="url(#mg1)"/>
<path d="M990.1 614.1L1015.6 599.3" fill="none" stroke-width="1.100"/>
<path d="M913.0 650.3A95.9 55.4 60 0 1 845.2 532.8L845.2 527.5A102.5 59.2 60 1 1 917.6 653.0z" fill="#b9cdf1"/>
<path d="M865.0 488.9A95.9 55.4 60 1 1 961.0 655.1A95.9 55.4 60 1 1 865.0 488.9z" fill="#aabfe2"/>
<g clip-path="url(#hc)"><path d="M879.2 513.4A67.6 39.1 60 1 1 946.8 630.6A67.6 39.1 60 1 1 879.2 513.4z" fill="url(#hg)" stroke="none"/><path d="M886.6 516.2A61.5 35.5 60 1 1 948.1 622.7A61.5 35.5 60 1 1 886.6 516.2z" fill="url(#hg)"/><path d="M929.2 491.6A61.5 35.5 60 1 1 990.7 598.1A61.5 35.5 60 1 1 929.2 491.6z" fill="#a3b6d8"/><path d="M938.9 509.7A41.0 23.7 60 1 1 979.9 580.7A41.0 23.7 60 1 1 938.9 509.7z" fill="#b1c6e9"/></g>
<path d="M879.2 513.4A67.6 39.1 60 1 1 946.8 630.6A67.6 39.1 60 1 1 879.2 513.4z" fill="none"/>
</g></svg>
<!--MODEL-END-->
<!--CUBE-START-->
<svg class="abs" style="left:1430px;top:55px" width="160" height="200" viewBox="1430 55 160 200">
<g fill="none" stroke="#444" stroke-width="1" stroke-linejoin="round"><path d="M1455 63.200l7.300 3.700v9.400l-7.300 4-7.300-4v-9.400z"/><path d="M1447.700 66.900l7.300 3.900 7.300-3.900M1455 70.800v9.500"/></g>
<g fill="#fff" stroke="#666" stroke-width="1" stroke-linejoin="miter">
<path d="M1489.600 87.300l.2 5.600q-9.700 2.200-13.500 8.400l3.300 2.300-11.300.4 1.600-10.700 2.900 3.200q5.600-7.400 16.800-9.200z"/>
<path d="M1526.400 87.300l-.2 5.600q9.700 2.200 13.500 8.400l-3.300 2.300 11.300.4-1.600-10.700-2.900 3.200q-5.600-7.400-16.800-9.200z"/>
</g>
<g fill="#444"><path d="M1499.200 99h15.200l-7.600-8.200z"/><path d="M1499.200 210.500h15.200l-7.600 8.200z"/><path d="M1449.300 147.600v15.600l-8.200-7.800z"/><path d="M1567 147.600v15.600l8.200-7.800z"/></g>
<g stroke-linejoin="round" stroke-width="13">
<path d="M1507.800 122.500L1539.500 140.800V171.300L1507.800 190.800L1476.500 171.300V140.800z" fill="#9c9c9c" stroke="#9c9c9c"/>
</g>
<path d="M1507.800 119.500L1540.500 138.400 1507.800 157.400 1475.200 138.400z" fill="#a3a3a3" stroke="#a3a3a3" stroke-width="4" stroke-linejoin="round"/>
<path d="M1471 140.500L1506.300 161V196.200L1471 175z" fill="#979797"/>
<path d="M1544.600 140.500L1509.300 161V196.200L1544.600 175z" fill="#9e9e9e"/>
<path d="M1507.800 147.500l7.400 4.300v8.600l-7.400 4.300-7.400-4.300v-8.600z" fill="#adadad"/>
<g font-family="Liberation Sans,sans-serif" font-weight="bold" font-size="13" fill="#c2c2c2" stroke="#7c7c7c" stroke-width=".6" text-anchor="middle">
<text transform="matrix(.8 -.46 .8 .46 1510 134)" >Top</text>
<text transform="matrix(.8 .46 0 .92 1487.500 173.500)">Left</text>
<text transform="matrix(.8 -.46 0 .92 1529 173.500)">Front</text>
</g>
<path d="M1507.800 205L1465.600 181.700" stroke="#3cc45a" stroke-width="1.300"/>
<path d="M1507.800 205L1550 181.700" stroke="#f0585c" stroke-width="1.300"/>
<path d="M1507.800 205V148" stroke="#72aef4" stroke-width="1.500"/>
<g font-family="Liberation Sans,sans-serif" font-weight="bold" font-size="8" text-anchor="middle">
<text transform="matrix(.9 -.5 0 1 1507.800 152.500)" fill="#4a98f0">Z</text>
<text transform="matrix(.9 -.5 0 1 1556.400 181)" fill="#f0585c">X</text>
<text transform="matrix(.9 .5 0 1 1460 179.500)" fill="#3cc45a">Y</text>
</g>
</svg>
<div class="abs" style="left:1519px;top:225px;width:59px;height:23px;border:1px solid #444;border-radius:3px;background:#fff"><span class="t" style="left:7px;top:4px;font-size:13px;color:#333">Menú</span><svg class="abs" style="left:45px;top:9px" width="8" height="5" viewBox="0 0 8 5"><path d="M0.500 0.500h7L4 4.500z" fill="#333"/></svg></div>
<!--CUBE-END-->
<!--DIALOG-START-->
<div class="abs" id="dlg">
<div class="abs" style="left:0;top:0;width:308px;height:26px;background:#333;border-radius:4px 4px 0 0"></div>
<div class="t" style="left:6px;top:7px;font-size:12px;font-weight:bold;color:#fff">Rugosidad superficial</div>
<svg class="abs" style="left:285px;top:5px" width="16" height="16" viewBox="0 0 16 16"><path d="M1 1l14 14M15 1L1 15" stroke="#fff" stroke-width="1.200"/></svg>
<div class="t" style="left:30.500px;top:45px;font-size:13px;color:#333">Tipo</div>
<div class="t" style="left:30.500px;top:72px;font-size:13px;color:#333">Valor</div>
<div class="abs sel" style="left:174px;top:42px"><span class="t" style="left:4px;top:2px;font-size:13px;color:#222">Ra</span><svg class="abs" style="left:84px;top:5px" width="10" height="7" viewBox="0 0 10 7"><path d="M1 1.200l4 4 4-4" fill="none" stroke="#111" stroke-width="1.900"/></svg></div>
<div class="abs sel" style="left:174px;top:69px;border-color:#b9c9ee;box-shadow:0 0 0 1px #e3eafa"><span class="t" style="left:4px;top:2px;font-size:13px;color:#999">6.3</span><svg class="abs" style="left:84px;top:5px" width="10" height="7" viewBox="0 0 10 7"><path d="M1 1.200l4 4 4-4" fill="none" stroke="#888" stroke-width="1.700"/></svg></div>
<div class="abs" style="left:174px;top:88px;width:100px;height:56px;border:1px solid #6b6b6b;background:#fff"></div>
<div class="t" style="left:179px;top:95px;font-size:13px;color:#222">3.2</div>
<div class="abs" style="left:175px;top:113px;width:98px;height:24px;background:#1967d2"></div>
<div class="t" style="left:179px;top:119px;font-size:13px;color:#fff">6.3</div>
<div class="abs" style="left:162px;top:31px;width:124px;height:117px;border:6px solid #fe0000"></div>
<div class="abs" style="left:34px;top:110px;width:110px;height:36px;border:1px solid #ccc;border-radius:3px;background:linear-gradient(#fff,#f0f0f0);text-align:center;line-height:34px;font-size:13px;color:#222">Actualización</div>
</div>
<!--DIALOG-END-->
<!--NOTES-START-->
<div class="t nt" style="top:761px">Rugosidad superficial Ra6.3</div>
<div class="t nt" style="top:761px;left:669.500px;color:#1a47b8">Consulte la página siguiente para obtener información detallada sobre los materiales.</div>
<svg class="abs" style="left:1165px;top:761px" width="13" height="13" viewBox="0 0 13 13"><g fill="none" stroke="#1a47b8" stroke-width="1.600"><path d="M10 7.500v3.700H1.800V3H5.500"/><path d="M7.500 1.200H11.800V5.500M11.600 1.400L5.800 7.200"/></g></svg>
<div class="t nt" style="top:782px">Las esquinas están acabadas con C/R de 0,1 a 0,4 mm. *para modelos C/R inferior a 0,5</div>
<div class="t nt" style="top:803px">Si el modelo no tiene ranura de holgura, las esquinas cilíndricas están acabadas R0~R0.4 *si el modelo es R0.5 o menos</div>
<div class="t nt" style="top:824px">En la esquina del cilindro se coloca una ranura de alivio opcional en la que se especifica el tratamiento térmico y la tolerancia del diámetro.</div>
<div class="t nt" style="top:844px">Tolerancia de grado medio JIS B 0405 para dimensiones del modelo excluyendo chaflanes</div>
<div class="t nt" style="top:865px">Para otras tolerancias estándar (concentricidad, paralelismo, cuadratura, etc.),</div>
<div class="t nt" style="top:865px;left:944px;color:#1a47b8">consulte la página Información técnica.</div>
<svg class="abs" style="left:1172px;top:865px" width="13" height="13" viewBox="0 0 13 13"><g fill="none" stroke="#1a47b8" stroke-width="1.600"><path d="M10 7.500v3.700H1.800V3H5.500"/><path d="M7.500 1.200H11.800V5.500M11.600 1.400L5.800 7.200"/></g></svg>
<svg class="abs" style="left:1430px;top:843px" width="14" height="14" viewBox="0 0 14 14"><circle cx="7" cy="7" r="6.500" fill="#333"/><text x="7" y="10.600" font-size="10" font-weight="bold" text-anchor="middle" fill="#fff" font-family="Liberation Sans,sans-serif">?</text></svg>
<div class="t" style="left:1447px;top:844px;font-size:13px;color:#666">About icons</div>
<svg class="abs" style="left:1430px;top:864px" width="14" height="14" viewBox="0 0 14 14"><circle cx="7" cy="7" r="6.500" fill="#333"/><text x="7" y="10.600" font-size="10" font-weight="bold" text-anchor="middle" fill="#fff" font-family="Liberation Sans,sans-serif">?</text></svg>
<div class="t" style="left:1447px;top:865px;font-size:13px;color:#666">Colores del modelo 3D</div>
<!--NOTES-END-->
<!--EDGES-START-->
<div class="abs" style="left:0;top:0;width:1px;height:900px;background:#8c8c8c"></div>
<div class="abs" style="left:0;top:0;width:1600px;height:1px;background:#e6e6e6"></div>
<div class="abs" style="left:1598px;top:0;width:2px;height:900px;background:linear-gradient(90deg,#c9c9c9,#a8a8a8)"></div>
<div class="abs" style="left:0;top:898px;width:1600px;height:2px;background:linear-gradient(#b4b4b4,#9c9c9c)"></div>
<svg class="abs" style="left:0;top:888px" width="12" height="12" viewBox="0 0 12 12"><path d="M0 0v12h12v-1.500H9A8 8 0 0 1 1 2.500V0z" fill="#fff"/><path d="M0.500 0v2.500A8.500 8.500 0 0 0 9 11H12" fill="none" stroke="#8c8c8c" stroke-width="1.200"/></svg>
<svg class="abs" style="left:1590px;top:890px" width="10" height="10" viewBox="0 0 10 10"><path d="M10 0v10H0V9.200H3A6 6 0 0 0 9 3.200V0z" fill="#fff"/><path d="M9 0v3A6 6 0 0 1 3 9H0" fill="none" stroke="#a8a8a8" stroke-width="1.800"/></svg>
<!--EDGES-END-->
</div>
</body>
</html>
